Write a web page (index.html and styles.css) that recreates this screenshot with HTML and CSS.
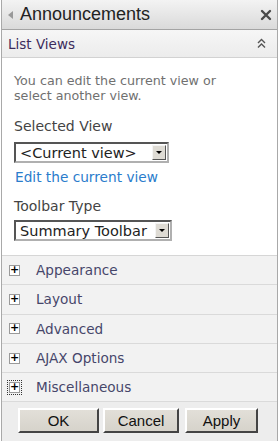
FILE: index.html
```html
<!DOCTYPE html>
<html lang="en">
<head>
    <meta charset="UTF-8">
    <title>Announcements</title>
    <link rel="stylesheet" href="styles.css">
</head>
<body>
    <div class="panel">
        <div class="title-bar">
            <span class="back-arrow"></span>
            <span class="title">Announcements</span>
            <svg class="close" width="12" height="12" viewBox="0 0 12 12">
                <path d="M2 2 L10 10 M10 2 L2 10" stroke="#4a4a4a" stroke-width="2.4" stroke-linecap="round"/>
            </svg>
        </div>

        <div class="group-head">
            <span>List Views</span>
            <svg class="collapse" width="9" height="11" viewBox="0 0 9 11">
                <path d="M1 5 L4.5 1.5 L8 5 M1 9.5 L4.5 6 L8 9.5" fill="none" stroke="#555" stroke-width="1.4"/>
            </svg>
        </div>

        <div class="group-body">
            <p class="hint">You can edit the current view or select another view.</p>

            <label class="field-label">Selected View</label>
            <div class="dropdown dd-view">
                <span class="dd-text">&lt;Current view&gt;</span>
                <span class="dd-btn"><span class="tri"></span></span>
            </div>
            <a class="edit-link" href="#">Edit the current view</a>

            <label class="field-label label-toolbar">Toolbar Type</label>
            <div class="dropdown dd-toolbar">
                <span class="dd-text">Summary Toolbar</span>
                <span class="dd-btn"><span class="tri"></span></span>
            </div>
        </div>

        <div class="section"><span class="plus">+</span><span class="sec-name">Appearance</span></div>
        <div class="section"><span class="plus">+</span><span class="sec-name">Layout</span></div>
        <div class="section"><span class="plus">+</span><span class="sec-name">Advanced</span></div>
        <div class="section"><span class="plus">+</span><span class="sec-name">AJAX Options</span></div>
        <div class="section"><span class="plus focused">+</span><span class="sec-name">Miscellaneous</span></div>

        <div class="buttons">
            <button class="btn btn-ok">OK</button>
            <button class="btn btn-cancel">Cancel</button>
            <button class="btn btn-apply">Apply</button>
        </div>
    </div>
</body>
</html>
```

FILE: styles.css
```css
body {
    margin: 0;
    background: #fff;
    font-family: 'DejaVu Sans', Verdana, sans-serif;
}
.panel {
    width: 275px;
    height: 441px;
    margin-left: 1px;
    border-left: 1px solid #a9a9a9;
    border-right: 1px solid #a9a9a9;
    display: flex;
    flex-direction: column;
    overflow: hidden;
}
.title-bar {
    height: 29px;
    flex: none;
    border-bottom: 1px solid #a4a4a4;
    background: linear-gradient(#f3f3f3, #dadada);
    display: flex;
    align-items: center;
    padding: 0 5px 0 6px;
}
.back-arrow {
    width: 0;
    height: 0;
    border-top: 4px solid transparent;
    border-bottom: 4px solid transparent;
    border-right: 5px solid #999;
    margin-right: 7px;
}
.title {
    font-family: 'Liberation Sans', Arial, sans-serif;
    font-size: 18px;
    color: #222;
    flex: 1;
}

.group-head {
    height: 27px;
    flex: none;
    border-bottom: 1px solid #d2d2d2;
    background: linear-gradient(#f6f6f6, #ececec);
    display: flex;
    align-items: center;
    justify-content: space-between;
    padding: 0 11px 0 6px;
    font-size: 13.5px;
    color: #3c2c5c;
}

.group-body {
    height: 198px;
    flex: none;
    padding: 15px 12px 0 12px;
    box-sizing: border-box;
    border-bottom: 1px solid #d6d6d6;
}
.hint {
    width: 222px;
    margin: 0 0 15px 0;
    font-size: 12.7px;
    line-height: 15px;
    color: #707070;
}
.field-label {
    display: block;
    font-size: 14px;
    color: #444;
    line-height: 17px;
    margin-bottom: 7px;
}
.label-toolbar { margin-bottom: 5px; }
.dropdown {
    height: 21px;
    box-sizing: border-box;
    border: 2px solid;
    border-color: #555 #b0b0b0 #b0b0b0 #555;
    background: #fff;
    display: flex;
    align-items: center;
}
.dd-view { width: 155px; }
.dd-toolbar { width: 158px; }
.dd-text {
    flex: 1;
    font-size: 14.5px;
    color: #222;
    padding-left: 4px;
    white-space: nowrap;
    overflow: hidden;
}
.dd-btn {
    width: 14px;
    height: 15px;
    box-sizing: border-box;
    margin-right: 1px;
    background: #dedbd4;
    border: 1px solid;
    border-color: #f4f4f4 #555 #555 #f4f4f4;
    display: flex;
    align-items: center;
    justify-content: center;
}
.tri {
    width: 0;
    height: 0;
    border-left: 3px solid transparent;
    border-right: 3px solid transparent;
    border-top: 3px solid #000;
}
.edit-link {
    display: block;
    font-size: 13.7px;
    line-height: 17px;
    color: #2a7ccc;
    text-decoration: none;
    margin: 6px 0 12px 1px;
}

.section {
    height: 28.3px;
    flex: none;
    border-bottom: 1px solid #dadada;
    background: #f2f2f2;
    display: flex;
    align-items: center;
    padding-left: 7px;
}
.plus {
    width: 11px;
    height: 11px;
    box-sizing: border-box;
    border: 1px solid #9a9a9a;
    background: #fff;
    font-size: 11px;
    line-height: 8px;
    text-align: center;
    font-weight: bold;
    color: #000;
    margin-right: 16px;
}
.plus.focused {
    outline: 1px dotted #333;
    outline-offset: 1px;
}
.sec-name {
    font-size: 13.6px;
    color: #46466a;
}

.buttons {
    flex: 1;
    background: #ededed;
    display: flex;
    align-items: flex-start;
    padding: 6px 0 0 16px;
    gap: 4px;
}
.btn {
    height: 25px;
    font-family: 'Liberation Sans', Arial, sans-serif;
    font-size: 15px;
    color: #111;
    background: linear-gradient(#e2dfd8, #d6d3cb);
    border: 2px solid;
    border-color: #fff #444 #444 #fff;
    padding: 0;
}
.btn-ok { width: 81px; }
.btn-cancel { width: 76px; }
.btn-apply { width: 73px; margin-left: 2px; }
```
